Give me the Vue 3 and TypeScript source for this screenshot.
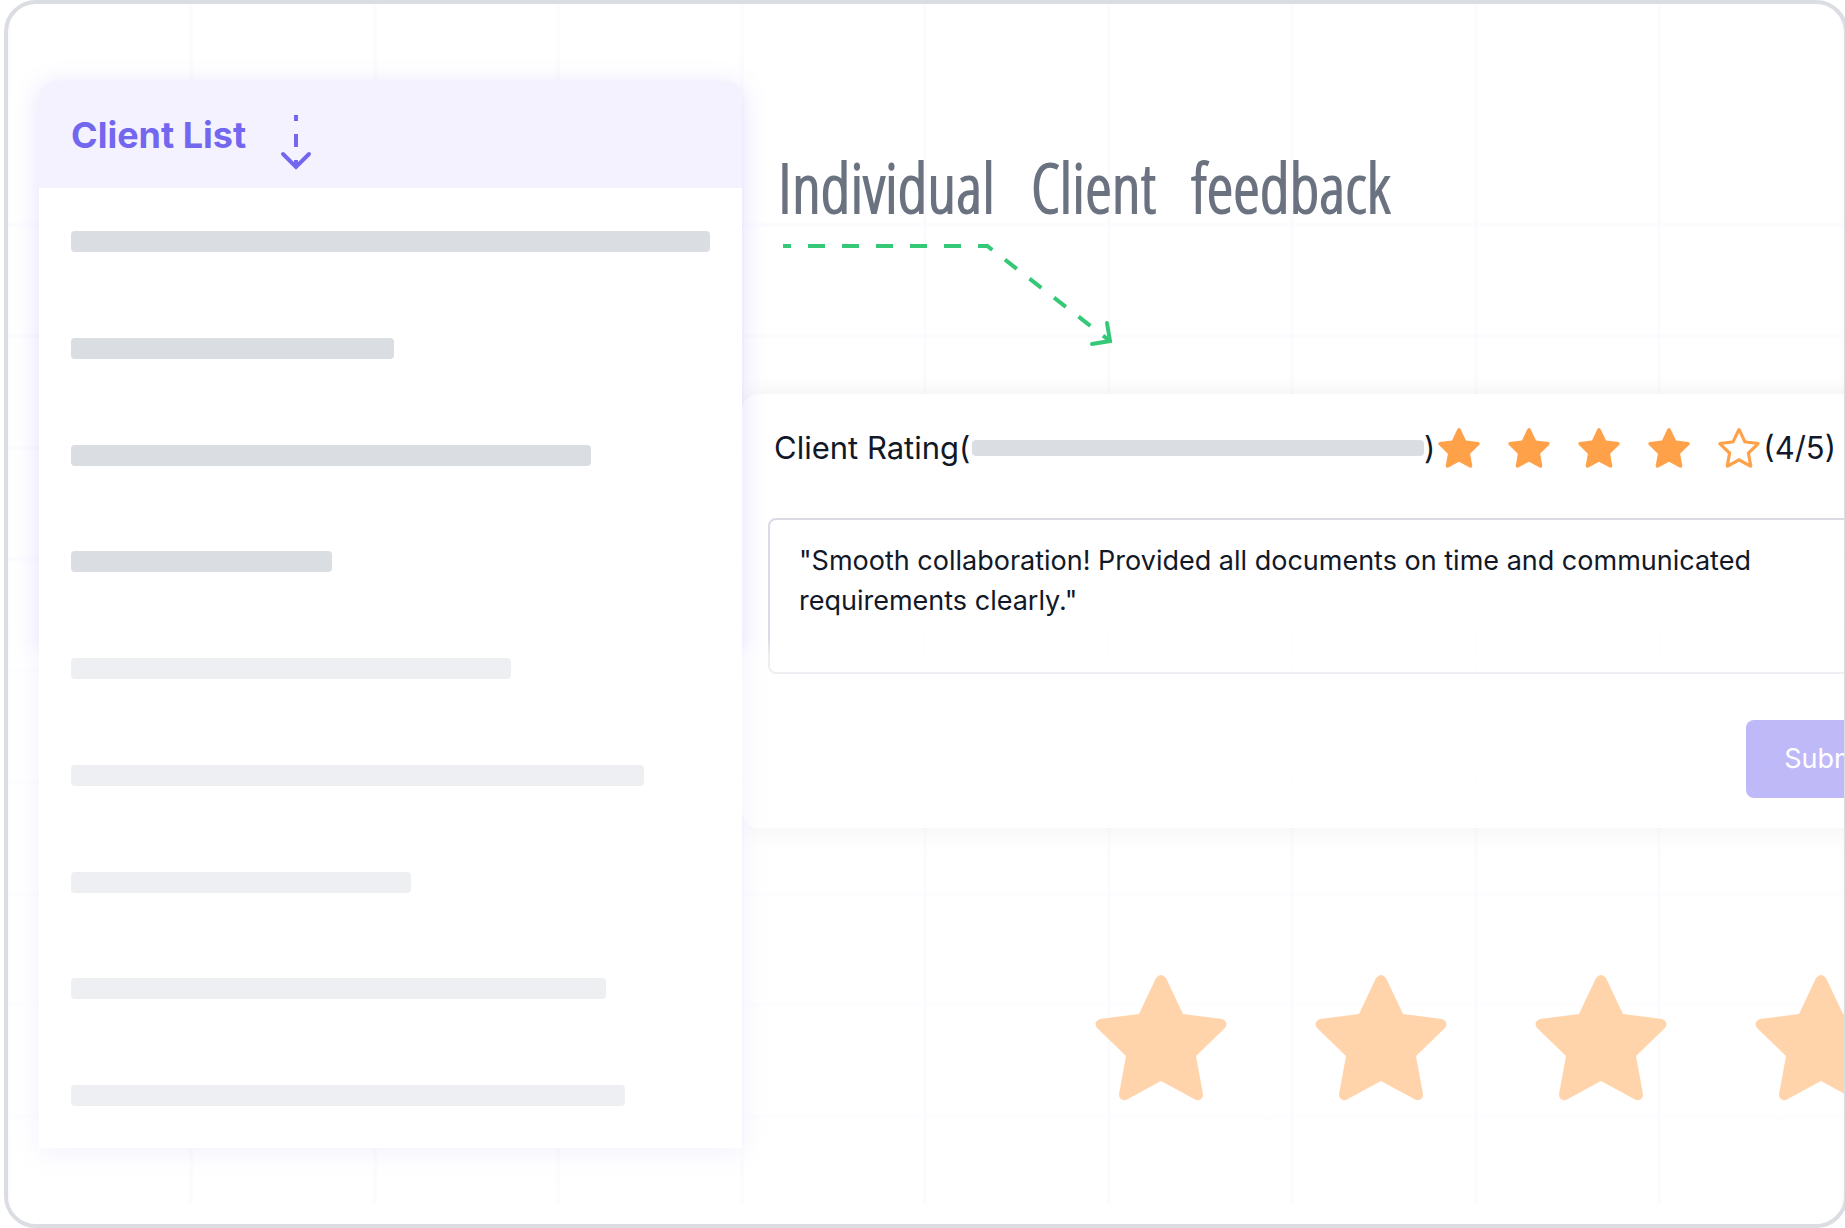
<script setup lang="ts">
import { ref } from 'vue'

const clients = [100, 50.6, 81.4, 40.8, 68.8, 89.6, 53.2, 83.7, 86.7]

const starPath =
  'M61 3Q66 -3 71 3L88 39L127 44Q134 47 130 53L101 81L108 119Q108 126 101 125L66 106L31 125Q24 126 24 119L31 81L2 53Q-2 47 5 44L44 39Z'

const rating = 4
const feedback = ref(
  '"Smooth collaboration! Provided all documents on time and communicated requirements clearly."',
)
</script>

<template>
  <div class="page">
    <main class="frame">
      <svg class="backdrop" width="100%" height="100%" aria-hidden="true">
        <defs>
          <pattern id="mesh-columns" x="-2" y="0" width="367" height="223" patternUnits="userSpaceOnUse">
            <path d="M0 0H4V223H0ZM183 0H187V223H183Z" fill="#7367f0" fill-opacity="0.025" />
          </pattern>
          <pattern id="mesh-rows" x="0" y="-4" width="367" height="223" patternUnits="userSpaceOnUse">
            <path d="M0 0H367V4H0ZM0 111H367V115H0Z" fill="#7367f0" fill-opacity="0.025" />
          </pattern>
        </defs>
        <rect width="100%" height="100%" fill="url(#mesh-columns)" />
        <rect y="52%" width="100%" height="48%" fill="url(#mesh-columns)" />
        <rect y="200" width="100%" height="100%" fill="url(#mesh-rows)" />
      </svg>

      <section class="clients">
        <header class="clients-head">
          <h2>Client List</h2>
          <svg width="32" height="56" viewBox="0 0 32 56" fill="none" stroke="#7367f0" stroke-width="4" aria-hidden="true">
            <path d="M16 1V7M16 20V33M16 46V52" />
            <path d="M3 40L16 53L29 40" stroke-linecap="round" />
          </svg>
        </header>
        <ul class="clients-body">
          <li v-for="(width, i) in clients" :key="i" :style="{ width: width + '%' }"></li>
        </ul>
      </section>

      <div class="detail">
        <h1><span>Individual</span> <span>Client</span> <span>feedback</span></h1>
        <svg class="pointer" width="336" height="108" viewBox="0 0 336 108" fill="none" stroke="#35c977" stroke-width="4" aria-hidden="true">
          <path d="M4 6H208" stroke-dasharray="17 17" stroke-dashoffset="9" />
          <path d="M207 5L331 101" stroke-dasharray="15 16" stroke-dashoffset="7" />
          <path d="M328 83L331 101L313 104" stroke-linecap="round" />
        </svg>

        <form class="card" @submit.prevent>
          <div class="rating">
            <span>Client Rating(</span>
            <span class="name"></span>
            <span>)</span>
            <span class="stars">
              <svg v-for="n in 5" :key="n" width="42" height="40" viewBox="0 0 132 126" aria-hidden="true">
                <clipPath id="star-edge"><path :d="starPath" /></clipPath>
                <path v-if="n <= rating" :d="starPath" fill="#ffa149" />
                <path v-else :d="starPath" fill="none" stroke="#ffa149" stroke-width="20" clip-path="url(#star-edge)" />
              </svg>
            </span>
            <span>({{ rating }}/5)</span>
          </div>
          <textarea v-model="feedback" aria-label="Client feedback" spellcheck="false"></textarea>
          <button type="submit">Submit</button>
        </form>

        <div class="big-stars" aria-hidden="true">
          <svg v-for="n in 4" :key="n" width="132" height="126" viewBox="0 0 132 126">
            <path :d="starPath" fill="#ffa149" />
          </svg>
        </div>
      </div>

      <div class="fade"></div>
    </main>
  </div>
</template>

<style>
body {
  margin: 0;
  background: #fff;
}
</style>

<style scoped>
.page {
  overflow: hidden;
  padding-left: 4px;
  font-family: Inter, 'Liberation Sans', sans-serif;
  color: #111827;
}

.frame {
  position: relative;
  box-sizing: border-box;
  min-height: 100vh;
  margin-right: -3px;
  padding: 77px 0 76px 31px;
  border: 4px solid #dadde2;
  border-radius: 32px;
  overflow: hidden;
  display: grid;
  grid-template-columns: 703fr 1102fr;
}

.backdrop {
  position: absolute;
  inset: 0 0 20px;
  height: calc(100% - 20px);
}

.clients {
  position: relative;
  z-index: 1;
  display: flex;
  flex-direction: column;
  min-width: 0;
  background: #fff;
  border-radius: 16px 16px 0 0;
  box-shadow: 0 4px 26px rgba(115, 103, 240, 0.2);
}

.clients-head {
  display: flex;
  align-items: center;
  gap: 34px;
  height: 107px;
  padding-left: 32px;
  border-radius: 16px 16px 0 0;
  background: #f4f2ff;
}

.clients-head h2 {
  margin: 0;
  font-size: 36px;
  line-height: 44px;
  font-weight: 700;
  color: #7367f0;
}

.clients-head svg {
  margin-top: 14px;
}

.clients-body {
  flex: 1;
  display: flex;
  flex-direction: column;
  justify-content: space-between;
  gap: 40px;
  margin: 0;
  padding: 43px 32px 42px 32px;
  list-style: none;
}

.clients-body li {
  height: 21px;
  border-radius: 4px;
  background: #dadde2;
}

.detail {
  position: relative;
  min-width: 0;
}

h1 {
  display: flex;
  gap: 36px;
  margin: 66px 0 0 36px;
  font-family: 'Open Sans Condensed Light', 'Open Sans Condensed', 'DejaVu Sans Condensed', sans-serif;
  font-size: 68px;
  line-height: 80px;
  font-weight: 300;
  white-space: nowrap;
  color: #6b7280;
  -webkit-text-stroke: 2px #6b7280;
}

.pointer {
  display: block;
  margin: 13px 0 0 37px;
}

.card {
  display: flex;
  flex-direction: column;
  margin: 46px -93px 0 0;
  padding: 24px 26px 30px;
  border-radius: 16px;
  background: rgba(255, 255, 255, 0.8);
  box-shadow: 0 4px 26px rgba(17, 24, 39, 0.09);
}

.rating {
  display: flex;
  align-items: center;
  height: 60px;
  padding: 0 75px 0 6px;
  font-size: 31px;
  line-height: 40px;
  white-space: nowrap;
}

.name {
  flex: 1;
  height: 16px;
  margin-left: 2px;
  border-radius: 4px;
  background: #dadde2;
}

.stars {
  display: flex;
  gap: 28px;
  margin: 0 3px;
}

textarea {
  box-sizing: border-box;
  height: 156px;
  margin: 40px 0 46px;
  padding: 21px 29px;
  border: 2px solid #dadbe4;
  border-radius: 8px;
  background: transparent;
  color: inherit;
  font-family: inherit;
  font-size: 27px;
  line-height: 40px;
  resize: none;
  outline: none;
}

button {
  align-self: flex-end;
  height: 78px;
  padding: 0 38px;
  border: 0;
  border-radius: 8px;
  background: #7367f0;
  color: #fff;
  font-family: inherit;
  font-size: 27px;
  line-height: 40px;
}

.big-stars {
  display: flex;
  gap: 88px;
  margin: 147px 0 0 353px;
}

.big-stars svg {
  flex: none;
}

.fade {
  position: absolute;
  z-index: 2;
  inset: 52% 0 0;
  background: linear-gradient(transparent, rgba(255, 255, 255, 0.54) 20px);
  pointer-events: none;
}
</style>
